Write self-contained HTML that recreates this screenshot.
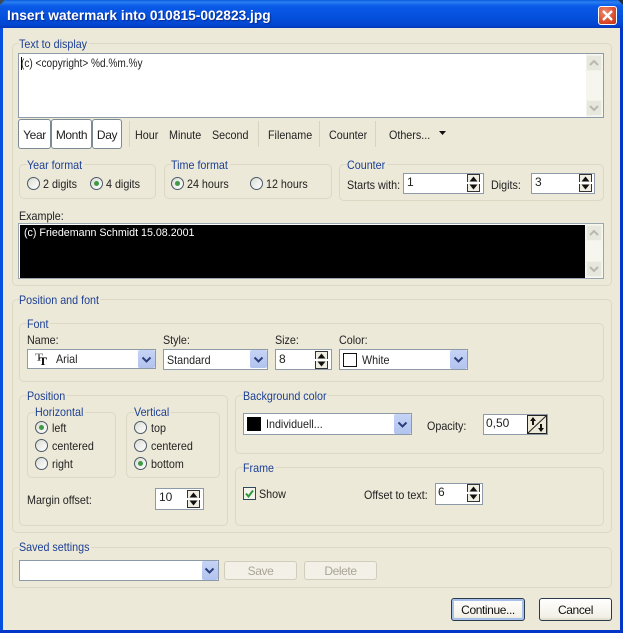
<!DOCTYPE html>
<html><head><meta charset="utf-8"><style>
html,body{margin:0;padding:0;width:623px;height:633px;overflow:hidden;background:#0831d9}
*{box-sizing:border-box}
#w{position:relative;width:623px;height:633px;font:12px "Liberation Sans",sans-serif;color:#222;background:#ECE9D8;overflow:hidden}
#w div,#w span,#w svg{position:absolute}
.t{white-space:nowrap;line-height:16px;transform:scaleX(.895);transform-origin:0 0}
.g{border:1px solid #dcd8c4;border-radius:5px}
.l{color:#1c3f94;background:#ECE9D8;white-space:nowrap;line-height:13px;height:13px;padding-right:2px;transform:scaleX(.895);transform-origin:0 0}
.e{background:#fff;border:1px solid #8d9aa8}
.r{width:13px;height:13px;border-radius:50%;border:1px solid #4a5a68;background:linear-gradient(135deg,#dcdcd4,#fff)}
.r.c:after{content:"";position:absolute;left:3px;top:3px;width:5px;height:5px;border-radius:50%;background:#3f9a46}
.a{width:17px;background:linear-gradient(#c6d3f6,#b2c3ee);border-radius:2px}
.b{border:1px solid #d0cdbc;border-radius:3px;background:#f3f1e7;text-align:center;color:#a8a595;line-height:19px;letter-spacing:-.4px}
.k{border:1px solid #2b3b4a;border-radius:3px;background:linear-gradient(#fff,#f2f0e6 85%,#dcd8c8);text-align:center;line-height:23px;color:#111;letter-spacing:-.4px}
.s{width:1px;background:#d8d4c2;height:26px;top:121px}
.tb{border:1px solid #7c8a94;border-radius:3px;background:#fff;text-align:center;line-height:30px;top:119px;height:30px;letter-spacing:-.4px}
.n{transform:none}
</style></head><body><div id="w">
<svg width="0" height="0" style="position:absolute"><defs>
<g id="sp"><path d="M.5 8V.5h12V8M.5 10v7.500h12V10" fill="#f0eee2" stroke="#333"/><path d="M2.500 7.500L6.500 2.500 10.500 7.500zM2.500 10.500H10.500L6.500 15.500z" fill="#111"/></g>
<g id="dn"><path d="M4.500 7.500L8.500 11.500 12.500 7.500" fill="none" stroke="#2b3f7a" stroke-width="2"/></g>
</defs></svg>

<!-- window frame -->
<div style="left:0;top:0;width:623px;height:28px;background:linear-gradient(#0a5ae0 0,#2a80f0 2px,#0a5ae8 6px,#0450dc 18px,#0345d0 25px,#0338b8 28px);border-radius:6px 6px 0 0"></div>
<div style="left:0;top:0;width:5px;height:5px;background:#3a4a5a;clip-path:polygon(0 0,100% 0,0 100%)"></div>
<div style="left:618px;top:0;width:5px;height:5px;background:#20303a;clip-path:polygon(0 0,100% 0,100% 100%)"></div>
<div style="left:0;top:28px;width:3px;height:605px;background:#0650e0"></div>
<div style="left:620px;top:28px;width:3px;height:605px;background:#0336c8"></div>
<div style="left:0;top:630px;width:623px;height:3px;background:#0336c8"></div>
<div class="t n" style="left:7px;top:8px;color:#fff;font:bold 13.75px/16px 'Liberation Sans',sans-serif;text-shadow:1px 1px 1px #0a2a90">Insert watermark into 010815-002823.jpg</div>
<div style="left:598px;top:6px;width:19px;height:19px;border:1px solid #fff;border-radius:3px;background:radial-gradient(circle at 35% 30%,#ef8a6c,#d8472a 65%,#bb3415)"></div>
<svg style="left:598px;top:6px" width="19" height="19"><path d="M5 5L14 14M14 5L5 14" stroke="#fff" stroke-width="2.300"/></svg>

<!-- Text to display -->
<div class="g" style="left:12px;top:43px;width:600px;height:243px"></div>
<div class="l" style="left:19px;top:38px">Text to display</div>
<div class="e" style="left:18px;top:53px;width:586px;height:65px"></div>
<div style="left:21px;top:57px;width:1px;height:13px;background:#000"></div>
<div class="t" style="left:21px;top:55px;transform:scaleX(.84)">(c) &lt;copyright&gt; %d.%m.%y</div>
<div style="left:586px;top:54px;width:17px;height:63px;background:#f6f5ee"></div>
<div style="left:586px;top:55px;width:16px;height:16px;background:#e6e7dd;border:1px solid #f2f2ea"></div>
<div style="left:586px;top:100px;width:16px;height:16px;background:#e6e7dd;border:1px solid #f2f2ea"></div>
<svg style="left:586px;top:55px" width="16" height="61"><path d="M4 10L8 6l4 4M4 51l4 4 4-4" fill="none" stroke="#b8b8ae" stroke-width="2"/></svg>

<div class="tb" style="left:18px;width:33px">Year</div>
<div class="tb" style="left:51px;width:41px">Month</div>
<div class="tb" style="left:92px;width:30px">Day</div>
<div class="s" style="left:129px"></div>
<div class="t" style="left:135px;top:127px">Hour</div>
<div class="t" style="left:169px;top:127px">Minute</div>
<div class="t" style="left:212px;top:127px">Second</div>
<div class="s" style="left:258px"></div>
<div class="t" style="left:268px;top:127px">Filename</div>
<div class="s" style="left:319px"></div>
<div class="t" style="left:329px;top:127px">Counter</div>
<div class="s" style="left:375px"></div>
<div class="t" style="left:389px;top:127px">Others...</div>
<svg style="left:439px;top:131px" width="7" height="5"><path d="M0 0h7L3.500 4z" fill="#111"/></svg>

<!-- Year format -->
<div class="g" style="left:19px;top:164px;width:137px;height:35px"></div>
<div class="l" style="left:27px;top:159px">Year format</div>
<div class="r" style="left:27px;top:177px"></div><div class="t" style="left:43px;top:176px">2 digits</div>
<div class="r c" style="left:90px;top:177px"></div><div class="t" style="left:106px;top:176px">4 digits</div>
<!-- Time format -->
<div class="g" style="left:164px;top:164px;width:168px;height:35px"></div>
<div class="l" style="left:171px;top:159px">Time format</div>
<div class="r c" style="left:171px;top:177px"></div><div class="t" style="left:187px;top:176px">24 hours</div>
<div class="r" style="left:250px;top:177px"></div><div class="t" style="left:266px;top:176px">12 hours</div>
<!-- Counter -->
<div class="g" style="left:339px;top:164px;width:265px;height:37px"></div>
<div class="l" style="left:347px;top:159px">Counter</div>
<div class="t" style="left:347px;top:177px">Starts with:</div>
<div class="e" style="left:403px;top:173px;width:81px;height:21px"></div>
<div class="t n" style="left:407px;top:174px">1</div>
<svg style="left:467px;top:174px" width="13" height="18"><use href="#sp"/></svg>
<div class="t" style="left:491px;top:177px">Digits:</div>
<div class="e" style="left:531px;top:173px;width:64px;height:21px"></div>
<div class="t n" style="left:535px;top:174px">3</div>
<svg style="left:579px;top:174px" width="13" height="18"><use href="#sp"/></svg>

<!-- Example -->
<div class="t" style="left:19px;top:208px">Example:</div>
<div style="left:18px;top:223px;width:586px;height:56px;background:#fff;border:1px solid #9aa6b0"></div>
<div style="left:20px;top:225px;width:565px;height:53px;background:#000"></div>
<div class="t n" style="left:24px;top:225px;color:#fff;font-size:10.7px">(c) Friedemann Schmidt 15.08.2001</div>
<div style="left:585px;top:224px;width:18px;height:54px;background:#f6f5ee"></div>
<div style="left:586px;top:225px;width:16px;height:16px;background:#e6e7dd;border:1px solid #f2f2ea"></div>
<div style="left:586px;top:261px;width:16px;height:16px;background:#e6e7dd;border:1px solid #f2f2ea"></div>
<svg style="left:586px;top:225px" width="16" height="52"><path d="M4 10L8 6l4 4M4 42l4 4 4-4" fill="none" stroke="#b8b8ae" stroke-width="2"/></svg>

<!-- Position and font -->
<div class="g" style="left:12px;top:299px;width:600px;height:234px"></div>
<div class="l" style="left:19px;top:294px">Position and font</div>
<div class="g" style="left:19px;top:323px;width:585px;height:59px"></div>
<div class="l" style="left:27px;top:318px">Font</div>
<div class="t" style="left:27px;top:332px">Name:</div>
<div class="t" style="left:163px;top:332px">Style:</div>
<div class="t" style="left:275px;top:332px">Size:</div>
<div class="t" style="left:339px;top:332px">Color:</div>

<div class="e" style="left:27px;top:349px;width:129px;height:20px"></div>
<div class="a" style="left:138px;top:350px;height:18px"></div>
<svg style="left:138px;top:350px" width="17" height="18"><use href="#dn"/></svg>
<div class="t n" style="left:35px;top:350px;font:bold 12px/14px 'Liberation Serif',serif;color:#777">T</div>
<div class="t n" style="left:39px;top:354px;font:bold 12px/14px 'Liberation Serif',serif;color:#000">T</div>
<div class="t" style="left:56px;top:351px">Arial</div>

<div class="e" style="left:163px;top:349px;width:105px;height:21px"></div>
<div class="a" style="left:250px;top:350px;height:18px"></div>
<svg style="left:250px;top:350px" width="17" height="18"><use href="#dn"/></svg>
<div class="t" style="left:167px;top:352px">Standard</div>

<div class="e" style="left:275px;top:349px;width:57px;height:21px"></div>
<div class="t n" style="left:279px;top:351px">8</div>
<svg style="left:315px;top:351px" width="13" height="18"><use href="#sp"/></svg>

<div class="e" style="left:339px;top:349px;width:129px;height:21px"></div>
<div style="left:343px;top:353px;width:14px;height:14px;background:#fff;border:1px solid #111"></div>
<div class="t" style="left:362px;top:352px">White</div>
<div class="a" style="left:450px;top:350px;height:19px"></div>
<svg style="left:450px;top:350px" width="17" height="18"><use href="#dn"/></svg>

<!-- Position -->
<div class="g" style="left:19px;top:395px;width:209px;height:131px"></div>
<div class="l" style="left:27px;top:390px">Position</div>
<div class="g" style="left:27px;top:412px;width:89px;height:66px"></div>
<div class="l" style="left:35px;top:406px">Horizontal</div>
<div class="g" style="left:126px;top:412px;width:94px;height:66px"></div>
<div class="l" style="left:134px;top:406px">Vertical</div>
<div class="r c" style="left:35px;top:421px"></div><div class="t" style="left:52px;top:420px">left</div>
<div class="r" style="left:35px;top:439px"></div><div class="t" style="left:52px;top:438px">centered</div>
<div class="r" style="left:35px;top:457px"></div><div class="t" style="left:52px;top:456px">right</div>
<div class="r" style="left:134px;top:421px"></div><div class="t" style="left:151px;top:420px">top</div>
<div class="r" style="left:134px;top:439px"></div><div class="t" style="left:151px;top:438px">centered</div>
<div class="r c" style="left:134px;top:457px"></div><div class="t" style="left:151px;top:456px">bottom</div>
<div class="t" style="left:27px;top:492px">Margin offset:</div>
<div class="e" style="left:155px;top:488px;width:49px;height:22px"></div>
<div class="t n" style="left:159px;top:489px">10</div>
<svg style="left:187px;top:490px" width="13" height="18"><use href="#sp"/></svg>

<!-- Background color -->
<div class="g" style="left:235px;top:395px;width:369px;height:59px"></div>
<div class="l" style="left:243px;top:390px">Background color</div>
<div class="e" style="left:243px;top:413px;width:169px;height:22px"></div>
<div style="left:247px;top:417px;width:14px;height:14px;background:#000"></div>
<div class="t" style="left:266px;top:416px">Individuell...</div>
<div class="a" style="left:394px;top:414px;height:20px"></div>
<svg style="left:394px;top:415px" width="17" height="18"><use href="#dn"/></svg>
<div class="t" style="left:427px;top:418px">Opacity:</div>
<div class="e" style="left:483px;top:414px;width:65px;height:21px"></div>
<div class="t n" style="left:486px;top:415px">0,50</div>
<svg style="left:527px;top:415px" width="20" height="19"><rect x=".5" y=".5" width="19" height="18" fill="#ece9d8" stroke="#222"/><path d="M1 18L19 1" stroke="#222"/><path d="M6 2L9 6H7V10H5V6H3zM14 17L11 13H13V9H15V13H17z" fill="#111"/></svg>

<!-- Frame -->
<div class="g" style="left:235px;top:467px;width:369px;height:59px"></div>
<div class="l" style="left:243px;top:462px">Frame</div>
<div style="left:243px;top:487px;width:13px;height:13px;background:#f4f4ec;border:1px solid #2f4a5e"></div>
<svg style="left:243px;top:487px" width="13" height="13"><path d="M3 6.500L5.500 9.500 10 3.500" fill="none" stroke="#2e9a3c" stroke-width="2"/></svg>
<div class="t" style="left:259px;top:486px">Show</div>
<div class="t" style="left:364px;top:487px">Offset to text:</div>
<div class="e" style="left:435px;top:483px;width:48px;height:22px"></div>
<div class="t n" style="left:438px;top:484px">6</div>
<svg style="left:467px;top:484px" width="13" height="18"><use href="#sp"/></svg>

<!-- Saved settings -->
<div class="g" style="left:12px;top:547px;width:600px;height:41px"></div>
<div class="l" style="left:19px;top:541px">Saved settings</div>
<div class="e" style="left:19px;top:560px;width:200px;height:21px"></div>
<div class="a" style="left:202px;top:561px;height:19px;width:16px"></div>
<svg style="left:201px;top:561px" width="17" height="18"><use href="#dn"/></svg>
<div class="b" style="left:224px;top:561px;width:73px;height:19px">Save</div>
<div class="b" style="left:304px;top:561px;width:73px;height:19px">Delete</div>

<div class="k" style="left:451px;top:598px;width:74px;height:23px;box-shadow:inset 0 0 0 2px #a6c0ea">Continue...</div>
<div class="k" style="left:539px;top:598px;width:73px;height:23px">Cancel</div>
</div></body></html>
